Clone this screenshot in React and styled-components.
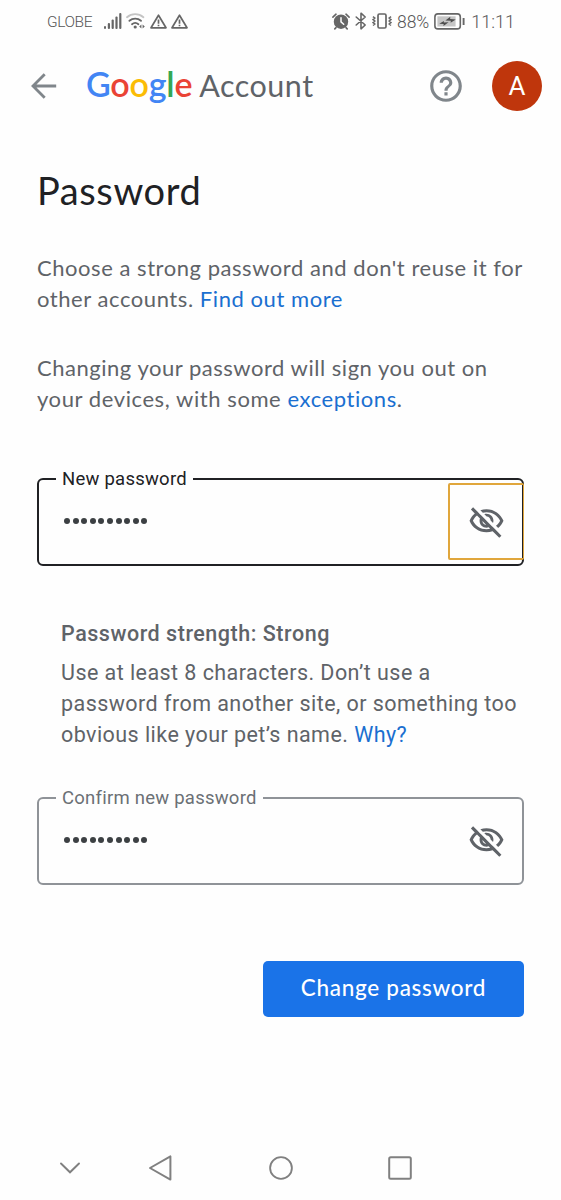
import React, { useState } from "react";
import styled, { createGlobalStyle } from "styled-components";

const GlobalStyle = createGlobalStyle`
  * {
    box-sizing: border-box;
  }

  body {
    margin: 0;
    background: #fefefe;
  }

  button {
    padding: 0;
    border: 0;
    background: none;
    cursor: pointer;
  }
`;

const product = `Lato, "Open Sans", sans-serif`;
const roboto = `Roboto, "Liberation Sans", sans-serif`;

const S = {
  Screen: styled.div`
    display: flex;
    flex-direction: column;
    width: 561px;
    height: 1200px;
    overflow: hidden;
    background: #fefefe;
    font-family: ${product};
    color: #5f6368;
  `,
  StatusBar: styled.div`
    display: flex;
    align-items: center;
    height: 42px;
    padding: 0 46px 0 47px;
    font-family: ${roboto};
    color: #666;

    svg {
      display: block;
      flex: none;
    }
  `,
  StatusText: styled.span`
    padding-top: 1px;
    font-size: ${({ $size }) => $size}px;
    font-weight: ${({ $weight }) => $weight ?? 400};
    letter-spacing: ${({ $spacing }) => $spacing ?? 0}px;
    line-height: 20px;
    color: #555;
    white-space: nowrap;
  `,
  StatusGroup: styled.div`
    display: flex;
    align-items: center;
    gap: ${({ $gap }) => $gap}px;
    margin-left: ${({ $left }) => $left};
  `,
  Header: styled.header`
    display: flex;
    align-items: center;
    height: 87px;
    padding: 0 19px 0 31px;
  `,
  IconButton: styled.button`
    display: flex;
    color: #80868b;
  `,
  Logo: styled.div`
    display: flex;
    align-items: baseline;
    margin: -2px 0 0 29px;
    line-height: 44px;
    white-space: nowrap;
  `,
  LogoName: styled.span`
    font-size: 34px;
    font-weight: 600;
    letter-spacing: -0.2px;
  `,
  Letter: styled.span`
    color: ${({ $color }) => $color};
  `,
  LogoProduct: styled.span`
    margin-left: 7px;
    font-size: 30.5px;
    letter-spacing: 0.5px;
  `,
  HeaderActions: styled.div`
    display: flex;
    align-items: center;
    gap: 27px;
    margin-left: auto;
  `,
  Avatar: styled.div`
    display: flex;
    align-items: center;
    justify-content: center;
    width: 50px;
    height: 50px;
    border-radius: 50%;
    background: #bf360c;
    color: #fff;
    font-family: ${roboto};
    font-size: 26px;
  `,
  Content: styled.main`
    display: flex;
    flex-direction: column;
    padding: 36px 37px 0;
  `,
  Title: styled.h1`
    margin: 0;
    color: #202124;
    font-size: 38px;
    font-weight: 400;
    line-height: 50px;
    letter-spacing: 0.6px;
  `,
  Paragraph: styled.p`
    margin: ${({ $top }) => $top}px 0 0;
    font-size: 22px;
    line-height: 31px;
  `,
  Line: styled.span`
    display: block;
    letter-spacing: ${({ $spacing }) => $spacing}px;
    white-space: nowrap;
  `,
  Link: styled.a`
    color: #1a6fd0;
    text-decoration: none;
  `,
  Field: styled.fieldset`
    display: flex;
    justify-content: space-between;
    width: 487px;
    height: 98px;
    margin: ${({ $top }) => $top}px 0 0;
    padding: 0 0 0 24px;
    border: 2px solid ${({ $active }) => ($active ? "#202124" : "#8f9398")};
    border-radius: 6px;
    font-family: ${roboto};
  `,
  Legend: styled.legend`
    margin-left: -7px;
    padding: 0 6px;
    color: ${({ $active }) => ($active ? "#202124" : "#6b7075")};
    font-size: 18.5px;
    line-height: 22px;
    letter-spacing: ${({ $spacing }) => $spacing}px;
  `,
  Dots: styled.div`
    display: flex;
    align-items: center;
    gap: 2.6px;
    height: 62px;
    padding-left: 1px;
  `,
  Dot: styled.span`
    width: 6px;
    height: 6px;
    border-radius: 50%;
    background: #3c4043;
  `,
  Toggle: styled.button`
    display: flex;
    align-items: center;
    justify-content: center;
    width: 76px;
    height: 77px;
    margin: -7px -2px 0 0;
    border: 2px solid ${({ $active }) => ($active ? "#e0a63c" : "transparent")};
    border-right-width: 1px;
    border-radius: 2px;
    color: #5f6368;
  `,
  Helper: styled.div`
    margin: 52px 0 0 24px;
    font-family: ${roboto};
    font-size: 21.5px;
    line-height: 31px;
  `,
  Strength: styled.strong`
    display: block;
    margin-bottom: 8px;
    font-weight: 500;
    font-size: 21.5px;
    letter-spacing: 0.53px;
  `,
  Submit: styled.button`
    align-self: flex-end;
    width: 261px;
    height: 56px;
    margin-top: 76px;
    padding-bottom: 3px;
    border-radius: 5px;
    background: #1a73e8;
    color: #fff;
    font-family: ${product};
    font-size: 22.5px;
    font-weight: 500;
    letter-spacing: 0.7px;
  `,
  NavBar: styled.nav`
    display: flex;
    align-items: center;
    height: 64px;
    margin-top: auto;
    padding-left: 58px;
    color: #808080;

    svg {
      display: block;
    }
  `,
  NavItem: styled.button`
    display: flex;
    width: 24px;
    margin-right: ${({ $right }) => $right ?? 0}px;
    color: inherit;
  `,
};

const logoLetters = [
  ["G", "#4285f4"],
  ["o", "#ea4335"],
  ["o", "#fbbc05"],
  ["g", "#4285f4"],
  ["l", "#34a853"],
  ["e", "#ea4335"],
];

const SignalIcon = () => (
  <svg width="18" height="16" viewBox="0 0 18 16" fill="currentColor">
    <rect x="0" y="13" width="2" height="3" rx="1" />
    <rect x="3.8" y="10" width="2.2" height="6" rx="1" />
    <rect x="7.6" y="6.5" width="2.2" height="9.5" rx="1" />
    <rect x="11.4" y="3.5" width="2.2" height="12.5" rx="1" />
    <rect x="15.2" y="0" width="2.2" height="16" rx="1" />
  </svg>
);

const WifiIcon = () => (
  <svg width="20" height="16" viewBox="0 0 20 16" fill="none" stroke="currentColor" strokeWidth="1.8" strokeLinecap="round">
    <path d="M1 4.2a12.5 12.5 0 0 1 16.4 0" stroke="#c4c4c4" />
    <path d="M3.4 7.8a9 9 0 0 1 11.6 0" />
    <path d="M6 11.2a5 5 0 0 1 6.4 0" />
    <circle cx="9.2" cy="14" r="1.6" fill="currentColor" stroke="none" />
    <path d="M15.4 11.4v4.2l-2.2-2.1zM16.6 11.4v4.2l2.2-2.1z" fill="currentColor" stroke="none" />
  </svg>
);

const WarningIcon = () => (
  <svg width="17" height="15" viewBox="0 0 17 15" fill="none" stroke="currentColor" strokeWidth="1.7" strokeLinejoin="round">
    <path d="M8.5 1.2 16 13.8H1z" />
    <path d="M8.5 5.4v4.3M8.5 10.8v1.5" />
  </svg>
);

const AlarmIcon = () => (
  <svg width="18" height="17" viewBox="0 0 18 17" fill="none" stroke="currentColor" strokeLinecap="round">
    <circle cx="9" cy="8.7" r="7.2" fill="currentColor" stroke="none" />
    <path d="M.9 4.1 4 1.2M17.1 4.1 14 1.2M4 14.6l-1.2 1.3M14 14.6l1.2 1.3" strokeWidth="1.6" />
    <path d="M9 4.8v4.1l2.7 2.4" stroke="#fefefe" strokeWidth="1.5" />
  </svg>
);

const BluetoothIcon = () => (
  <svg width="12" height="18" viewBox="0 0 12 18" fill="none" stroke="currentColor" strokeWidth="1.6" strokeLinejoin="round" strokeLinecap="round">
    <path d="M1.2 5 10.2 13 6 16.8V1.2L10.2 5l-9 8" />
  </svg>
);

const VibrateIcon = () => (
  <svg width="20" height="16" viewBox="0 0 20 16" fill="none" stroke="currentColor" strokeWidth="1.7">
    <rect x="6" y="1" width="8" height="14" rx="1.4" />
    <path d="M.9 3.6 2.8 5 1 6.6 2.8 8 1 9.6 2.8 11 1 12.5M19.1 3.6 17.2 5 19 6.6 17.2 8 19 9.6 17.2 11 19 12.5" strokeWidth="1.5" />
  </svg>
);

const BatteryIcon = () => (
  <svg width="32" height="17" viewBox="0 0 32 17" fill="none">
    <rect x=".9" y=".9" width="25.4" height="15" rx="3" stroke="currentColor" strokeWidth="1.6" />
    <rect x="3.4" y="3.3" width="18.2" height="10.2" fill="#c6c6c6" />
    <path d="M11.4 7.6 16.3 3.8l-.2 2.2 5.7.5-5.2 3.3.2-2zM14.6 9.3l-5.2 3.6.3-2-4.5-.2 4.7-2.7-.1 1.5z" fill="#4d4d4d" />
    <path d="M29.6 5v7" stroke="currentColor" strokeWidth="1.9" />
  </svg>
);

const BackIcon = () => (
  <svg width="26" height="26" viewBox="0 0 26 26" fill="none" stroke="currentColor" strokeWidth="2.8">
    <path d="M25.2 13H2.6M13.7 1.3 2 13l11.7 11.7" />
  </svg>
);

const HelpIcon = () => (
  <svg width="38" height="38" viewBox="0 0 24 24" fill="currentColor">
    <path d="M11 18h2v-2h-2v2zm1-16C6.48 2 2 6.48 2 12s4.48 10 10 10 10-4.48 10-10S17.52 2 12 2zm0 18c-4.41 0-8-3.59-8-8s3.59-8 8-8 8 3.59 8 8-3.59 8-8 8zm0-14c-2.21 0-4 1.79-4 4h2c0-1.1.9-2 2-2s2 .9 2 2c0 2-3 1.75-3 5h2c0-2.25 3-2.5 3-5 0-2.21-1.79-4-4-4z" />
  </svg>
);

const EyeOffIcon = () => (
  <svg width="37" height="37" viewBox="0 0 24 24" fill="currentColor">
    <path d="M10.58,7.25l1.56,1.56c1.38,0.07,2.47,1.17,2.54,2.54l1.56,1.56C16.4,12.47,16.5,12,16.5,11.5C16.5,9.02,14.48,7,12,7C11.5,7,11.03,7.1,10.58,7.25z" />
    <path d="M12,6c3.79,0,7.17,2.13,8.82,5.5c-0.64,1.32-1.56,2.44-2.66,3.33l1.42,1.42c1.51-1.26,2.7-2.89,3.43-4.74C21.27,7.11,17,4,12,4c-1.4,0-2.73,0.25-3.98,0.7L9.63,6.3C10.4,6.12,11.19,6,12,6z" />
    <path d="M16.43,15.93l-1.25-1.25l-1.27-1.27l-3.82-3.82L8.82,8.32L7.57,7.07L6.09,5.59L3.31,2.81L1.89,4.22l2.53,2.53C2.92,8.02,1.73,9.64,1,11.5C2.73,15.89,7,19,12,19c1.4,0,2.73-0.25,3.98-0.7l4.3,4.3l1.41-1.41l-3.78-3.78L16.43,15.93z M11.86,14.19c-1.38-0.07-2.47-1.17-2.54-2.54L11.86,14.19z M12,17c-3.79,0-7.17-2.13-8.82-5.5c0.64-1.32,1.56-2.44,2.66-3.33l1.91,1.91C7.6,10.53,7.5,11,7.5,11.5c0,2.48,2.02,4.5,4.5,4.5c0.5,0,0.97-0.1,1.42-0.25l0.95,0.95C13.6,16.88,12.81,17,12,17z" />
  </svg>
);

const PasswordField = ({ label, spacing, active, top, onFocus }) => (
  <S.Field $active={active} $top={top} onClick={onFocus}>
    <S.Legend $active={active} $spacing={spacing}>{label}</S.Legend>
    <S.Dots>
      {Array.from({ length: 10 }, (_, i) => <S.Dot key={i} />)}
    </S.Dots>
    <S.Toggle $active={active} type="button" aria-label="Show password">
      <EyeOffIcon />
    </S.Toggle>
  </S.Field>
);

const StatusBar = () => (
  <S.StatusBar>
    <S.StatusText $size={15.5} $weight={300} $spacing={-0.4}>GLOBE</S.StatusText>
    <S.StatusGroup $gap={4} $left="12px">
      <SignalIcon />
      <WifiIcon />
      <WarningIcon />
      <WarningIcon />
    </S.StatusGroup>
    <S.StatusGroup $gap={5} $left="auto">
      <AlarmIcon />
      <BluetoothIcon />
      <VibrateIcon />
      <S.StatusText $size={17.5} $weight={300}>88%</S.StatusText>
      <BatteryIcon />
      <S.StatusText $size={18} $weight={300}>11:11</S.StatusText>
    </S.StatusGroup>
  </S.StatusBar>
);

const Header = () => (
  <S.Header>
    <S.IconButton aria-label="Back">
      <BackIcon />
    </S.IconButton>
    <S.Logo>
      <S.LogoName>
        {logoLetters.map(([letter, color], i) => (
          <S.Letter key={i} $color={color}>{letter}</S.Letter>
        ))}
      </S.LogoName>
      <S.LogoProduct>Account</S.LogoProduct>
    </S.Logo>
    <S.HeaderActions>
      <S.IconButton aria-label="Help">
        <HelpIcon />
      </S.IconButton>
      <S.Avatar>A</S.Avatar>
    </S.HeaderActions>
  </S.Header>
);

const NavBar = () => (
  <S.NavBar>
    <S.NavItem $right={66} aria-label="Hide">
      <svg width="24" height="26" viewBox="0 0 24 26" fill="none" stroke="currentColor" strokeWidth="1.9" strokeLinecap="round">
        <path d="M3 8.5l9 8.8 9-8.8" />
      </svg>
    </S.NavItem>
    <S.NavItem $right={96.5} aria-label="Back">
      <svg width="24" height="26" viewBox="0 0 24 26" fill="none" stroke="currentColor" strokeWidth="2" strokeLinejoin="round">
        <path d="M22.4 1.4v23.2L2 13z" />
      </svg>
    </S.NavItem>
    <S.NavItem $right={95} aria-label="Home">
      <svg width="26" height="26" viewBox="0 0 26 26" fill="none" stroke="currentColor" strokeWidth="2">
        <circle cx="13" cy="13" r="11.8" />
      </svg>
    </S.NavItem>
    <S.NavItem aria-label="Recent">
      <svg width="24" height="26" viewBox="0 0 24 26" fill="none" stroke="currentColor" strokeWidth="2">
        <rect x="1.2" y="2.2" width="21.6" height="21.6" rx="1.5" />
      </svg>
    </S.NavItem>
  </S.NavBar>
);

const App = () => {
  const [activeField, setActiveField] = useState("new");

  return (
    <S.Screen>
      <GlobalStyle />
      <StatusBar />
      <Header />
      <S.Content>
        <S.Title>Password</S.Title>
        <S.Paragraph $top={37}>
          <S.Line $spacing={0.54}>Choose a strong password and don't reuse it for</S.Line>
          <S.Line $spacing={0.56}>other accounts. <S.Link>Find out more</S.Link></S.Line>
        </S.Paragraph>
        <S.Paragraph $top={38}>
          <S.Line $spacing={0.52}>Changing your password will sign you out on</S.Line>
          <S.Line $spacing={0.58}>your devices, with some <S.Link>exceptions</S.Link>.</S.Line>
        </S.Paragraph>
        <PasswordField
          label="New password"
          spacing={0.24}
          top={54}
          active={activeField === "new"}
          onFocus={() => setActiveField("new")}
        />
        <S.Helper>
          <S.Strength>Password strength: Strong</S.Strength>
          <S.Line $spacing={0.44}>Use at least 8 characters. Don’t use a</S.Line>
          <S.Line $spacing={0.45}>password from another site, or something too</S.Line>
          <S.Line $spacing={0.44}>obvious like your pet’s name. <S.Link>Why?</S.Link></S.Line>
        </S.Helper>
        <PasswordField
          label="Confirm new password"
          spacing={0.24}
          top={37}
          active={activeField === "confirm"}
          onFocus={() => setActiveField("confirm")}
        />
        <S.Submit type="button">Change password</S.Submit>
      </S.Content>
      <NavBar />
    </S.Screen>
  );
};

export default App;
